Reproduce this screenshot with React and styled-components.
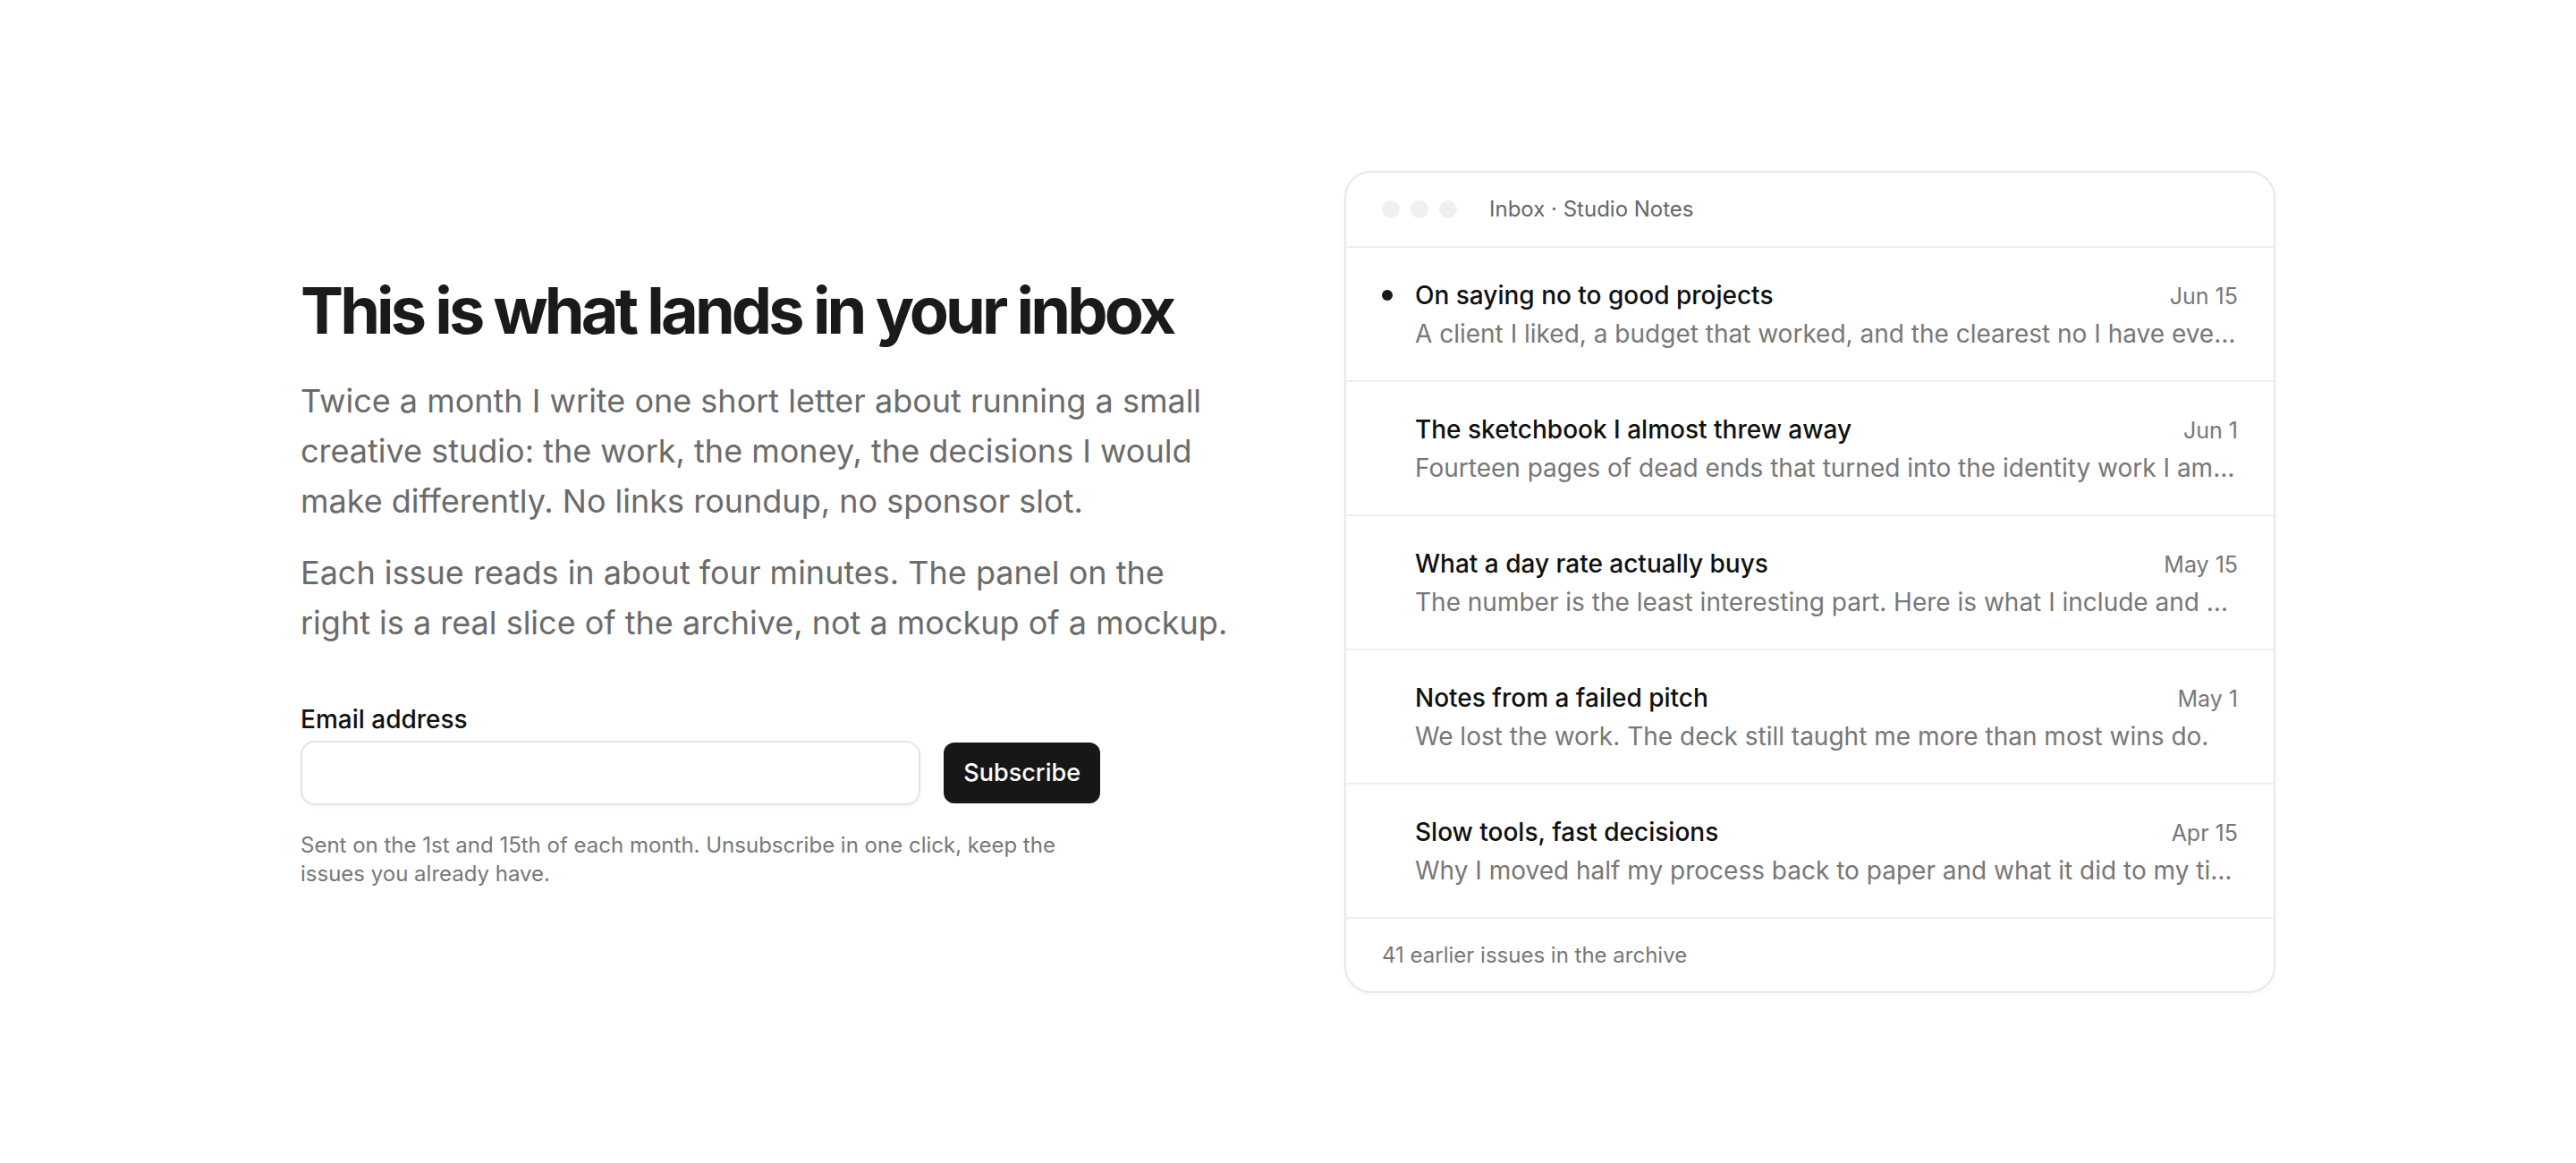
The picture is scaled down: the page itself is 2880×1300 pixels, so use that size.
import React from 'react'
import styled, { createGlobalStyle } from 'styled-components'

const GlobalStyle = createGlobalStyle`
    * { box-sizing: border-box; }
    html, body { margin: 0; padding: 0; background: #fff; }
    body {
        font-family: Inter, "Noto Sans", "Liberation Sans", sans-serif;
        color: #1a1a1a;
        -webkit-font-smoothing: antialiased;
    }
`;

// 화면 전체, 가운데 정렬
const Page = styled.main`
    min-height: 100vh;
    display: flex;
    align-items: center;
    justify-content: center;
`;

const Layout = styled.div`
    width: 2208px;
    display: grid;
    grid-template-columns: 1fr 1041px;
    column-gap: 120px;
    align-items: center;
`;

// 왼쪽 소개 영역
const Intro = styled.section`
    display: flex;
    flex-direction: column;
`;

const Title = styled.h1`
    margin: 0 0 33px;
    font-size: 72px;
    line-height: 1.1;
    font-weight: 700;
    letter-spacing: -0.054em;
    color: #1a1a1a;
`;

const Lead = styled.p`
    margin: 0 0 24px;
    font-size: 36px;
    line-height: 56px;
    color: #6b6b6b;
    max-width: 1050px;
    &:last-of-type { margin-bottom: 0; }
`;

// 구독 폼
const Form = styled.form`
    margin-top: 62px;
    width: 894px;
    display: flex;
    flex-direction: column;
`;

const Label = styled.label`
    font-size: 28px;
    line-height: 36px;
    font-weight: 500;
    color: #111;
    margin-bottom: 6px;
`;

const FieldRow = styled.div`
    display: flex;
    align-items: center;
    gap: 26px;
`;

const Input = styled.input`
    flex: 1;
    height: 72px;
    border: 2px solid #e4e4e4;
    border-radius: 16px;
    background: #fff;
    box-shadow: 0 2px 4px rgba(0, 0, 0, 0.04);
    font: inherit;
    font-size: 28px;
    padding: 0 22px;
    outline: none;
`;

const Button = styled.button`
    height: 68px;
    padding: 0 22px;
    border: none;
    border-radius: 12px;
    background: #171717;
    color: #fff;
    font-family: inherit;
    font-size: 27px;
    font-weight: 500;
    cursor: pointer;
`;

const Note = styled.p`
    margin: 29px 0 0;
    font-size: 24px;
    line-height: 32px;
    color: #777;
`;

// 오른쪽 받은편지함 패널
const Panel = styled.section`
    border: 2px solid #e8e8e8;
    border-radius: 30px;
    background: #fff;
    overflow: hidden;
    box-shadow: 0 2px 6px rgba(0, 0, 0, 0.03);
`;

const PanelHeader = styled.header`
    height: 84px;
    display: flex;
    align-items: center;
    gap: 36px;
    padding: 0 40px;
    border-bottom: 2px solid #efefef;
`;

const Dots = styled.div`
    display: flex;
    gap: 12px;
`;

const Dot = styled.span`
    width: 20px;
    height: 20px;
    border-radius: 50%;
    background: #f1f0ef;
`;

const PanelTitle = styled.span`
    font-size: 24px;
    color: #666;
`;

const Issue = styled.article`
    display: grid;
    grid-template-columns: 12px 1fr;
    column-gap: 25px;
    padding: 34px 40px 33px;
    border-bottom: 2px solid #efefef;
`;

const Unread = styled.span`
    width: 12px;
    height: 12px;
    margin-top: 13px;
    border-radius: 50%;
    background: ${p => (p.$on ? '#1a1a1a' : 'transparent')};
`;

const IssueBody = styled.div`
    min-width: 0;
    display: flex;
    flex-direction: column;
    gap: 5px;
`;

const IssueTop = styled.div`
    display: flex;
    justify-content: space-between;
    align-items: baseline;
    gap: 24px;
`;

const IssueTitle = styled.span`
    font-size: 28px;
    line-height: 38px;
    font-weight: 500;
    color: #111;
`;

const IssueDate = styled.span`
    font-size: 25px;
    color: #777;
    white-space: nowrap;
`;

const Preview = styled.span`
    font-size: 28px;
    line-height: 38px;
    color: #777;
    white-space: nowrap;
    overflow: hidden;
    text-overflow: ellipsis;
`;

const PanelFooter = styled.footer`
    height: 81px;
    display: flex;
    align-items: center;
    padding: 0 40px;
    font-size: 24px;
    color: #777;
`;

const issues = [
    { title: 'On saying no to good projects', date: 'Jun 15', unread: true,
      preview: 'A client I liked, a budget that worked, and the clearest no I have ever said out loud.' },
    { title: 'The sketchbook I almost threw away', date: 'Jun 1',
      preview: 'Fourteen pages of dead ends that turned into the identity work I am proudest of.' },
    { title: 'What a day rate actually buys', date: 'May 15',
      preview: 'The number is the least interesting part. Here is what I include and what I leave out.' },
    { title: 'Notes from a failed pitch', date: 'May 1',
      preview: 'We lost the work. The deck still taught me more than most wins do.' },
    { title: 'Slow tools, fast decisions', date: 'Apr 15',
      preview: 'Why I moved half my process back to paper and what it did to my timelines.' },
];

export default function App() {
    return (
        <>
            <GlobalStyle />
            <Page>
                <Layout>
                    <Intro>
                        <Title>This is what lands in your inbox</Title>
                        <Lead>
                            Twice a month I write one short letter about running a small creative studio:
                            the work, the money, the decisions I would make differently. No links roundup,
                            no sponsor slot.
                        </Lead>
                        <Lead>
                            Each issue reads in about four minutes. The panel on the right is a real slice
                            of the archive, not a mockup of a mockup.
                        </Lead>
                        <Form onSubmit={e => e.preventDefault()}>
                            <Label htmlFor="email">Email address</Label>
                            <FieldRow>
                                <Input id="email" type="email" />
                                <Button type="submit">Subscribe</Button>
                            </FieldRow>
                            <Note>
                                Sent on the 1st and 15th of each month. Unsubscribe in one click, keep the
                                issues you already have.
                            </Note>
                        </Form>
                    </Intro>

                    <Panel>
                        <PanelHeader>
                            <Dots>
                                <Dot />
                                <Dot />
                                <Dot />
                            </Dots>
                            <PanelTitle>Inbox · Studio Notes</PanelTitle>
                        </PanelHeader>
                        {issues.map(item => (
                            <Issue key={item.title}>
                                <Unread $on={item.unread} />
                                <IssueBody>
                                    <IssueTop>
                                        <IssueTitle>{item.title}</IssueTitle>
                                        <IssueDate>{item.date}</IssueDate>
                                    </IssueTop>
                                    <Preview>{item.preview}</Preview>
                                </IssueBody>
                            </Issue>
                        ))}
                        <PanelFooter>41 earlier issues in the archive</PanelFooter>
                    </Panel>
                </Layout>
            </Page>
        </>
    );
}
